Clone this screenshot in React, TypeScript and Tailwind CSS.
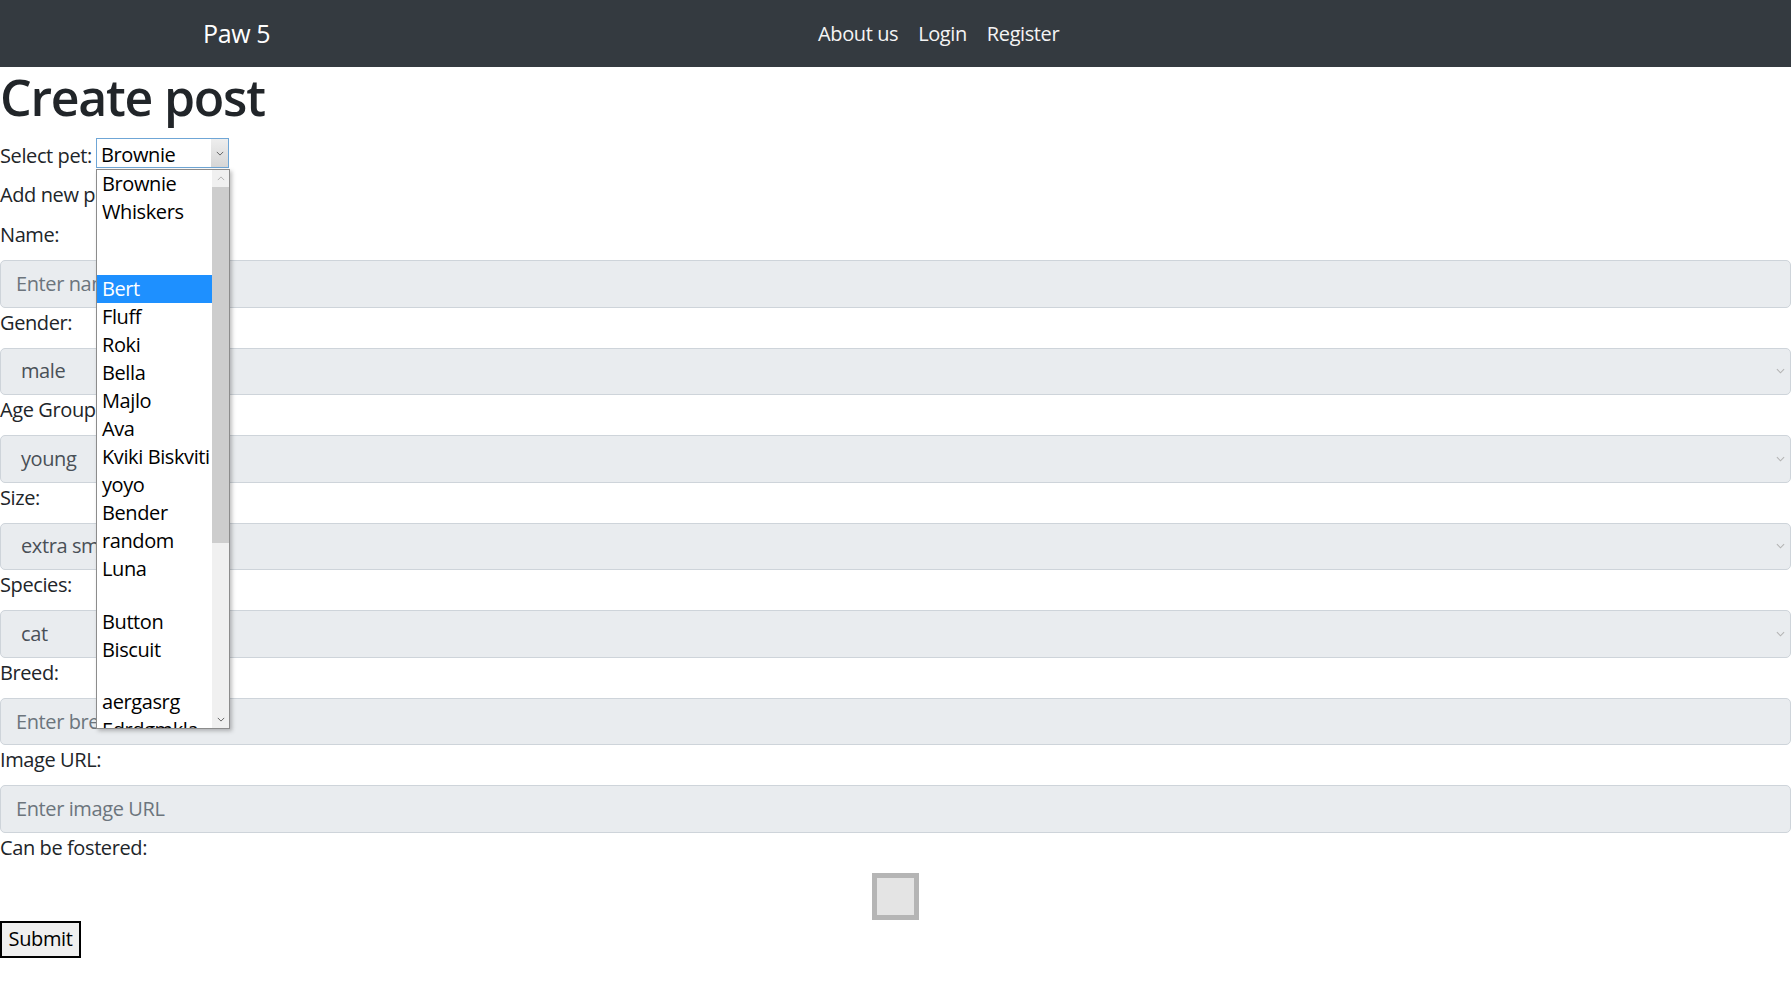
import { ReactNode } from "react";

const petOptions: (string | null)[] = [
    "Brownie", "Whiskers", null, null, "Bert", "Fluff", "Roki", "Bella", "Majlo", "Ava",
    "Kviki Biskviti", "yoyo", "Bender", "random", "Luna", null, "Button", "Biscuit", null,
    "aergasrg", "Edrdgmkla",
];

function Chevron({ className = "" }: { className?: string }) {
    return (
        <svg viewBox="0 0 10 6" className={className} fill="none" stroke="currentColor" strokeWidth="1.2">
            <path d="M1 1l4 4 4-4" />
        </svg>
    );
}

function Label({ children }: { children: ReactNode }) {
    return <label className="block mb-[10px] whitespace-nowrap">{children}</label>;
}

function TextField({ placeholder }: { placeholder: string }) {
    return (
        <input
            type="text"
            placeholder={placeholder}
            className="block w-full h-[47.5px] px-[15px] bg-[#e9ecef] border border-[#ced4da] rounded-[5px] text-[#495057] placeholder:text-[#6c757d] outline-none tracking-[-0.02em]"
        />
    );
}

function SelectField({ value }: { value: string }) {
    return (
        <div className="relative h-[47.5px] bg-[#e9ecef] border border-[#ced4da] rounded-[5px] flex items-center pl-[20px] text-[#495057]">
            <span>{value}</span>
            <Chevron className="absolute right-[5px] top-1/2 -translate-y-1/2 w-[9px] h-[6px] text-[#b4b4b4]" />
        </div>
    );
}

export default function App() {
    return (
        <div className="relative min-h-[990px] bg-white text-[#212529] text-[20px] leading-[30px] tracking-[-0.02em] font-['Open_Sans',sans-serif]">
            {/* Navbar */}
            <nav className="h-[67px] bg-[#343a40] flex items-center">
                <a className="ml-[203px] text-[25px] leading-[37px] text-white">Paw 5</a>
                <div className="ml-[538px] flex">
                    {["About us", "Login", "Register"].map((l) => (
                        <a key={l} className="px-[10px] text-[#f4f4f4]">{l}</a>
                    ))}
                </div>
            </nav>

            <main>
                <h1 className="text-[50px] leading-[60px] font-semibold mb-[11px] tracking-[-0.025em]">Create post</h1>

                <div className="flex items-start h-[32px] mb-[10px]">
                    <span className="w-[96px] pt-[3px] whitespace-nowrap">Select pet:</span>
                    <div className="relative w-[133px] h-[30px] border border-[#6fa6d6] bg-white pl-[4px] pt-[2px] text-black leading-[28px]">
                        <span>Brownie</span>
                        <div className="absolute right-0 top-0 bottom-0 w-[17px] bg-gradient-to-b from-[#eeeeee] to-[#d6d6d6] flex items-center justify-center">
                            <Chevron className="w-[8px] h-[5px] text-[#606060]" />
                        </div>
                    </div>
                </div>

                <p className="mb-[10px] whitespace-nowrap">Add new pet:</p>

                <Label>Name:</Label>
                <TextField placeholder="Enter name" />
                <Label>Gender:</Label>
                <SelectField value="male" />
                <Label>Age Group:</Label>
                <SelectField value="young" />
                <Label>Size:</Label>
                <SelectField value="extra small" />
                <Label>Species:</Label>
                <SelectField value="cat" />
                <Label>Breed:</Label>
                <TextField placeholder="Enter breed" />
                <Label>Image URL:</Label>
                <TextField placeholder="Enter image URL" />
                <Label>Can be fostered:</Label>
                <div className="w-[47px] h-[47px] mx-auto border-[5px] border-[#b5b5b5] bg-[#e4e4e4]" />
                <button className="mt-[1px] h-[37px] w-[81px] border-2 border-black bg-[#efefef] text-[20px] leading-none text-black">
                    Submit
                </button>
            </main>

            {/* Open dropdown list */}
            <div className="absolute left-[96px] top-[169px] w-[134px] h-[560px] bg-white border border-[#8c8c8c] shadow-[2px_2px_4px_rgba(0,0,0,0.25)] flex overflow-hidden">
                <div className="flex-1 min-w-0 overflow-hidden">
                    {petOptions.map((p, i) =>
                        p === null ? (
                            <div key={i} className="h-[24.5px]" />
                        ) : (
                            <div
                                key={i}
                                className={
                                    p === "Bert"
                                        ? "h-[28px] leading-[28px] pl-[5px] whitespace-nowrap bg-[#1e90ff] text-white"
                                        : "h-[28px] leading-[28px] pl-[5px] whitespace-nowrap text-black"
                                }
                            >
                                {p}
                            </div>
                        )
                    )}
                </div>
                <div className="w-[17px] shrink-0 h-full bg-[#f0f0f0] flex flex-col">
                    <div className="h-[17px] flex items-center justify-center">
                        <Chevron className="w-[8px] h-[5px] rotate-180 text-[#b0b0b0]" />
                    </div>
                    <div className="h-[356px] bg-[#cdcdcd]" />
                    <div className="flex-1" />
                    <div className="h-[17px] flex items-center justify-center">
                        <Chevron className="w-[8px] h-[5px] text-[#606060]" />
                    </div>
                </div>
            </div>
        </div>
    );
}
